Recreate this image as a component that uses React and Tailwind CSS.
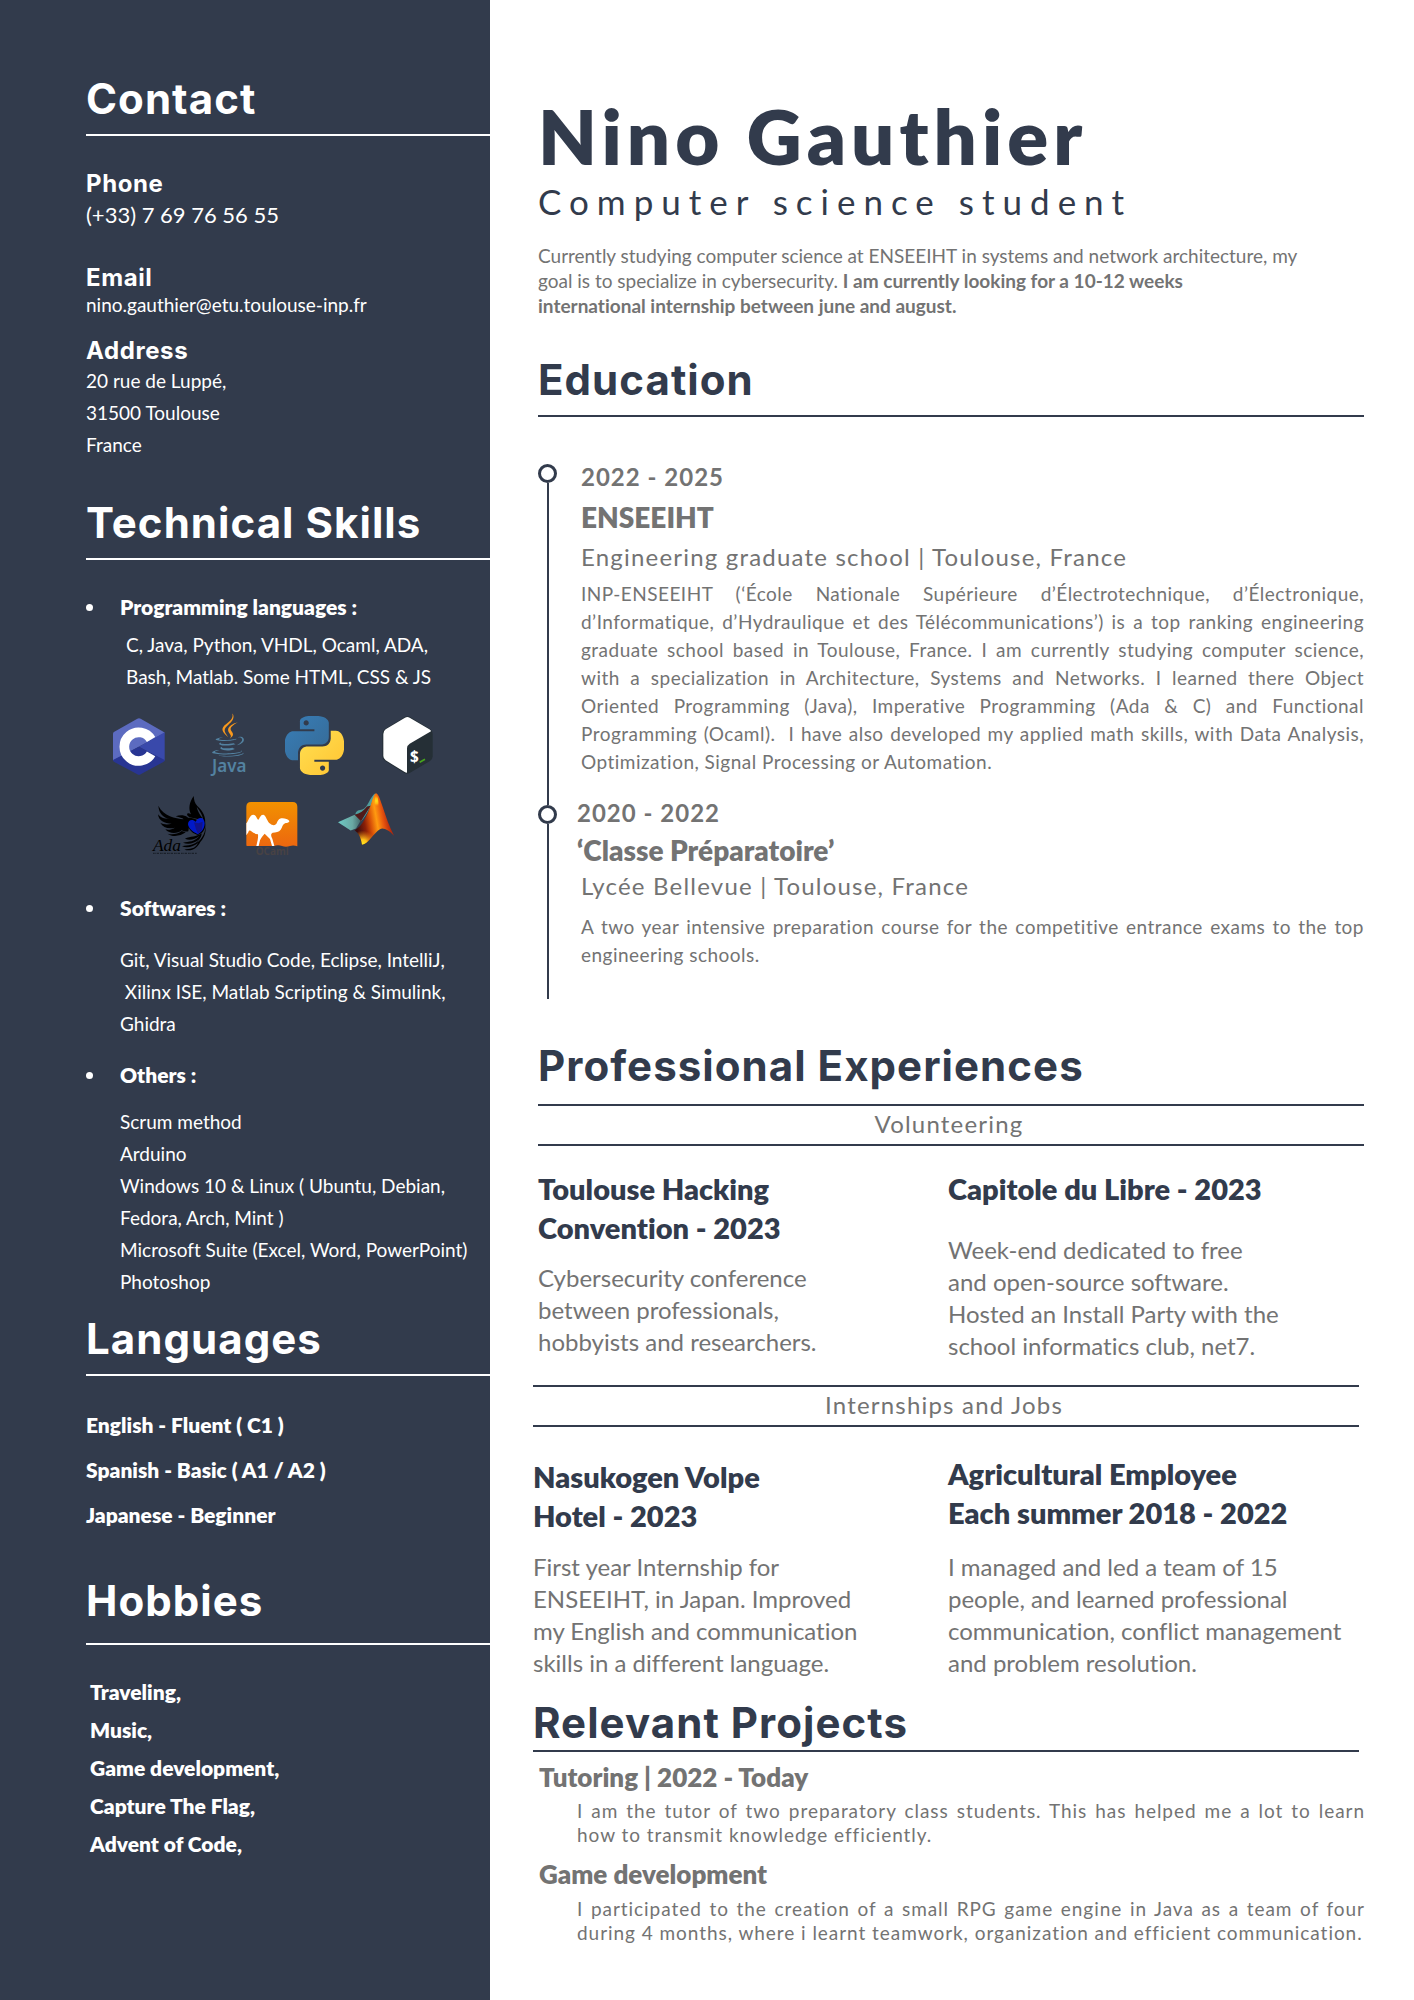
import React from "react";

const HEADING = "font-['Inter',sans-serif] font-bold";

function SideHeading({ children, className = "" }) {
  return (
    <h2 className={`${HEADING} border-b-2 border-white text-[42px] leading-[48px] tracking-wide ${className}`}>
      {children}
    </h2>
  );
}

function SideLabel({ children, className = "" }) {
  return <h3 className={`${HEADING} text-[24px] leading-[28px] tracking-wide ${className}`}>{children}</h3>;
}

function MainHeading({ children, className = "" }) {
  return (
    <h2
      className={`${HEADING} border-b-2 border-[#323b4c] text-[42px] leading-[48px] tracking-wide text-[#323b4c] ${className}`}
    >
      {children}
    </h2>
  );
}

function BulletTitle({ children, className = "" }) {
  return (
    <h3 className={`flex items-center text-[21px] leading-[28px] font-extrabold ${className}`}>
      <span className="mr-[27px] size-[7px] rounded-full bg-white" />
      {children}
    </h3>
  );
}

function CLogo() {
  return (
    <svg className="mt-[5px] h-[57px] w-[52px]" viewBox="39 54 156 171" role="img" aria-label="C">
      <path d="M39 182V101q0-4 4-6L112 56q5-3 10 0l68 39q4 2 4 4L116.500 140Z" fill="#5c6bc0" />
      <path d="M116.500 140L194 97V182Z" fill="#3949ab" />
      <path d="M39 180L116.500 140L194 180q0 4-4 6l-68 37q-5 3-10 0L43 186q-4-2-4-6Z" fill="#283593" />
      <path d="M153.200 118.500A43 43 0 1 0 153.200 161.500" fill="none" stroke="#fff" strokeWidth="29" />
    </svg>
  );
}

function JavaLogo() {
  return (
    <svg className="ml-[47px] h-[63px] w-[33px] overflow-visible" viewBox="0 0 33 63" role="img" aria-label="Java">
      <g transform="translate(-6 0) scale(0.345)">
        <g fill="#5382a1">
          <path d="M47.617 98.12s-4.767 2.774 3.397 3.71c9.892 1.13 14.947.968 25.845-1.092 0 0 2.871 1.795 6.873 3.351-24.439 10.47-55.308-.607-36.115-5.969zm-2.988-13.665s-5.348 3.959 2.823 4.805c10.567 1.091 18.91 1.18 33.354-1.6 0 0 1.993 2.025 5.132 3.131-29.542 8.64-62.446.68-41.309-6.336z" />
          <path d="M102.123 108.229s3.529 2.91-3.888 5.159c-14.102 4.272-58.706 5.56-71.094.171-4.451-1.938 3.899-4.625 6.526-5.192 2.739-.593 4.303-.485 4.303-.485-4.953-3.487-32.013 6.85-13.743 9.815 49.821 8.076 90.817-3.637 77.896-9.468zM49.912 70.294s-22.686 5.389-8.033 7.348c6.188.828 18.518.638 30.011-.326 9.39-.789 18.813-2.474 18.813-2.474s-3.308 1.419-5.704 3.053c-23.042 6.061-67.544 3.238-54.731-2.958 10.832-5.239 19.644-4.643 19.644-4.643zM90.609 93.041c23.421-12.167 12.591-23.86 5.032-22.285-1.848.385-2.677.72-2.677.72s.688-1.079 2-1.543c14.953-5.255 26.451 15.503-4.823 23.725 0-.002.359-.327.468-.617z" />
          <path d="M52.214 126.021c22.476 1.437 57-.8 57.817-11.436 0 0-1.571 4.032-18.577 7.231-19.186 3.612-42.854 3.191-56.887.874 0 .001 2.875 2.381 17.647 3.331z" />
        </g>
        <g fill="#f8981d">
          <path d="M69.802 61.271c6.025 6.935-1.58 13.17-1.58 13.17s15.289-7.891 8.269-17.777c-6.559-9.215-11.587-13.792 15.635-29.58 0 .001-42.731 10.67-22.324 34.187z" />
          <path d="M76.491 1.587S89.459 14.563 64.188 34.51c-20.266 16.006-4.621 25.13-.007 35.559-11.831-10.673-20.509-20.07-14.688-28.815C58.041 28.42 81.722 22.195 76.491 1.587z" />
        </g>
      </g>
      <text x="0" y="59" fontSize="17" fontWeight="600" fontFamily="Noto Sans, sans-serif" fill="#5382a1">Java</text>
    </svg>
  );
}

function PythonLogo() {
  return (
    <svg className="mt-[3px] ml-10 size-[59px]" viewBox="0.300 0.100 23.500 23.800" role="img" aria-label="Python">
      <defs>
        <linearGradient id="pyBlue" x1="0" y1="0" x2="1" y2="1">
          <stop offset="0" stopColor="#387eb8" />
          <stop offset="1" stopColor="#366994" />
        </linearGradient>
        <linearGradient id="pyYellow" x1="0" y1="0" x2="1" y2="1">
          <stop offset="0" stopColor="#ffe052" />
          <stop offset="1" stopColor="#ffc331" />
        </linearGradient>
      </defs>
      <path
        fill="url(#pyBlue)"
        d="M14.25.18l.9.2.73.26.59.3.45.32.34.34.25.34.16.33.1.3.04.26.02.2-.01.13V8.5l-.05.63-.13.55-.21.46-.26.38-.3.31-.33.25-.35.19-.35.14-.33.1-.3.07-.26.04-.21.02H8.77l-.69.05-.59.14-.5.22-.41.27-.33.32-.27.35-.2.36-.15.37-.1.35-.07.32-.04.27-.02.21v3.06H3.17l-.21-.03-.28-.07-.32-.12-.35-.18-.36-.26-.36-.36-.35-.46-.32-.59-.28-.73-.21-.88-.14-1.05-.05-1.23.06-1.22.16-1.04.24-.87.32-.71.36-.57.4-.44.42-.33.42-.24.4-.16.36-.1.32-.05.24-.01h.16l.06.01h8.16v-.83H6.18l-.01-2.75-.02-.37.05-.34.11-.31.17-.28.25-.26.31-.23.38-.2.44-.18.51-.15.58-.12.64-.1.71-.06.77-.04.84-.02 1.27.05zm-6.3 1.98l-.23.33-.08.41.08.41.23.34.33.22.41.09.41-.09.33-.22.23-.34.08-.41-.08-.41-.23-.33-.33-.22-.41-.09-.41.09z"
      />
      <path
        fill="url(#pyYellow)"
        d="M21.04 6.11l.28.06.32.12.35.18.36.27.36.35.35.47.32.59.28.73.21.88.14 1.04.05 1.23-.06 1.23-.16 1.04-.24.86-.32.71-.36.57-.4.45-.42.33-.42.24-.4.16-.36.09-.32.05-.24.02-.16-.01h-8.22v.82h5.84l.01 2.76.02.36-.05.34-.11.31-.17.29-.25.25-.31.24-.38.2-.44.17-.51.15-.58.13-.64.09-.71.07-.77.04-.84.01-1.27-.04-1.07-.14-.9-.2-.73-.25-.59-.3-.45-.33-.34-.34-.25-.34-.16-.33-.1-.3-.04-.25-.02-.2.01-.13v-5.34l.05-.64.13-.54.21-.46.26-.38.3-.32.33-.24.35-.2.35-.14.33-.1.3-.06.26-.04.21-.02.13-.01h5.84l.69-.05.59-.14.5-.21.41-.28.33-.32.27-.35.2-.36.15-.36.1-.35.07-.32.04-.28.02-.21V6.07h2.09l.14.01zm-6.47 14.25l-.23.33-.08.41.08.41.23.33.33.23.41.08.41-.08.33-.23.23-.33.08-.41-.08-.41-.23-.33-.33-.23-.41-.08-.41.08z"
      />
    </svg>
  );
}

function BashLogo() {
  return (
    <svg className="mt-[3px] ml-[38px] h-[58px] w-[51px]" viewBox="847 47 153 174" role="img" aria-label="Bash">
      <path d="M915 50q8-4 16 0l60 36q8 5 8 14v68q0 9-8 14l-61 36q-8 4-16 0l-58-36q-8-5-8-14v-68q0-9 8-14Z" fill="#252f36" />
      <path d="M916 52q7-4 14 0l59 35q5 3 5 6L930 130q-8 5-8 14v73q-4 0-7-2l-57-35q-7-5-7-13v-66q0-9 7-14Z" fill="#fff" />
      <text x="931" y="184" fontSize="46" fontWeight="700" fontFamily="Noto Sans, sans-serif" fill="#fff">$</text>
      <path d="M960 186L976 177" stroke="#47a51d" strokeWidth="5" />
    </svg>
  );
}

function AdaLogo() {
  return (
    <svg className="mt-[3px] h-[59px] w-[54px] overflow-visible" viewBox="155 288 162 177" role="img" aria-label="Ada">
      <g fill="#000">
        <path d="M174 317C176 340 188 353 208 357C190 357 180 352 173 343C175 362 192 371 214 371C200 375 189 373 180 368C188 383 205 388 224 383C213 389 204 391 195 388C207 403 232 402 244 391C250 394 257 396 264 394L268 365L262 352C250 344 238 345 226 349C238 352 246 354 250 358C225 354 190 350 174 317Z" />
        <path d="M202 401C216 412 240 409 256 397L244 393C232 402 216 405 202 401Z" />
        <path d="M280 288C266 308 264 327 272 343C260 335 255 345 268 352L292 357L306 354C298 344 292 333 289 320C300 335 306 344 308 357L314 376C318 352 308 333 291 318C283 309 281 300 280 288Z" />
        <path d="M262 354C272 352 282 356 292 361C302 352 315 357 315 375C314 393 303 402 292 405C278 401 267 392 262 376Z" />
        <path d="M315 372C318 395 305 416 291 428C300 414 304 408 304 400C288 411 270 409 254 416C268 423 284 418 298 407C283 426 265 424 248 428C263 435 281 431 297 418C283 439 263 434 245 439C262 446 280 439 293 429C285 448 267 446 252 449C275 456 291 444 300 426C315 410 318 392 315 372Z" />
      </g>
      <path d="M263 373C263 360 276 356 286 365C294 350 312 350 313 370C313 387 302 397 292 403C280 396 265 388 263 373Z" fill="#0019c8" />
      <path d="M281 367L294 370L307 365L305 389L293 402L287 388Z" fill="#11128a" />
      <text x="158" y="452" fontSize="52" fontStyle="italic" fontFamily="Liberation Serif, serif" fill="#000">Ada</text>
      <path d="M158 460H290" stroke="#1a202a" strokeWidth="4" strokeDasharray="5 2 3 2 6 3" />
    </svg>
  );
}

function OCamlLogo() {
  return (
    <svg className="mt-[9px] ml-10 h-[54px] w-[52px] overflow-visible" viewBox="440 308 154 162" role="img" aria-label="OCaml">
      <defs>
        <linearGradient id="camlOrange" x1="0" y1="0" x2="0" y2="1">
          <stop offset="0" stopColor="#f29100" />
          <stop offset="1" stopColor="#ec670f" />
        </linearGradient>
      </defs>
      <path d="M440 322q0-14 14-14h125q14 0 14 14V441q-12-5-22-1q-12 4-24 0q-12-4-24 0H442q-2 0-2-4Z" fill="url(#camlOrange)" />
      <path
        d="M440 372C446 366 450 346 461 346C470 346 471 360 476 361C480 357 483 345 491 346C500 348 502 368 512 373C518 379 528 379 531 372C535 363 538 356 549 357C556 357 566 360 569 365C569 371 560 370 554 373C548 376 548 384 543 391C538 398 528 400 519 400C513 403 513 409 518 418L524 440H517L511 419L495 403C491 407 485 414 481 423L477 440H470C474 424 476 413 475 405C466 403 460 401 455 396C451 392 447 394 446 399L440 408Z"
        fill="#fff"
      />
      <text x="468" y="467" fontSize="30" fontWeight="700" fontFamily="Noto Sans, sans-serif" fill="#484244">OCaml</text>
    </svg>
  );
}

function MatlabLogo() {
  return (
    <svg className="ml-10 h-[52px] w-[56px]" viewBox="714 280 168 155" role="img" aria-label="Matlab">
      <defs>
        <linearGradient id="mlTeal" x1="0" y1="0" x2="1" y2="0">
          <stop offset="0" stopColor="#6ecbc6" />
          <stop offset="0.600" stopColor="#6aa8a3" />
          <stop offset="1" stopColor="#3f5f63" />
        </linearGradient>
        <linearGradient id="mlPeak" x1="768" y1="370" x2="882" y2="350" gradientUnits="userSpaceOnUse">
          <stop offset="0" stopColor="#3a0d0d" />
          <stop offset="0.220" stopColor="#8a1f08" />
          <stop offset="0.380" stopColor="#d95208" />
          <stop offset="0.540" stopColor="#ff9a10" />
          <stop offset="0.700" stopColor="#e8570e" />
          <stop offset="0.850" stopColor="#b92b0c" />
          <stop offset="1" stopColor="#a51d08" />
        </linearGradient>
        <radialGradient id="mlGlow" cx="788" cy="434" r="42" gradientUnits="userSpaceOnUse">
          <stop offset="0" stopColor="#ffee20" />
          <stop offset="0.350" stopColor="#ffc21a" />
          <stop offset="1" stopColor="#ff8a10" stopOpacity="0" />
        </radialGradient>
        <radialGradient id="mlTop" cx="829" cy="303" r="34" gradientUnits="userSpaceOnUse">
          <stop offset="0" stopColor="#ffe21a" />
          <stop offset="0.250" stopColor="#ffb612" />
          <stop offset="0.500" stopColor="#ff8a10" stopOpacity="0" />
        </radialGradient>
      </defs>
      <path d="M714 367L764 345L786 356L768 386L752 392Z" fill="url(#mlTeal)" />
      <path d="M766 344C768 331 778 331 787 329C804 323 810 290 826 280C816 310 802 346 783 364Z" fill="#4f9d9d" />
      <path d="M764 345C780 341 792 332 801 320L812 318L783 364Z" fill="#501919" />
      <path
        d="M828 280C836 282 841 300 848 321C858 351 868 381 882 408C868 392 850 382 840 388C822 398 806 431 786 435C783 418 780 404 764 391C788 378 802 345 812 316C818 298 822 282 828 280Z"
        fill="url(#mlPeak)"
      />
      <path
        d="M828 280C836 282 841 300 848 321C858 351 868 381 882 408C868 392 850 382 840 388C822 398 806 431 786 435C783 418 780 404 764 391C788 378 802 345 812 316C818 298 822 282 828 280Z"
        fill="url(#mlGlow)"
      />
      <path d="M828 280C834 284 836 310 836 330H824C822 310 824 290 828 280Z" fill="url(#mlTop)" />
    </svg>
  );
}

function Sidebar() {
  return (
    <aside className="bg-[#323b4c] pt-[75px] pb-20 pl-[86px] text-[19px] leading-[32px] text-white">
      <section>
        <SideHeading className="pb-[11px]">Contact</SideHeading>
        <SideLabel className="mt-[34px]">Phone</SideLabel>
        <p className="mt-px text-[22px]">(+33) 7 69 76 56 55</p>
        <SideLabel className="mt-[33px]">Email</SideLabel>
        <a href="mailto:nino.gauthier@etu.toulouse-inp.fr" className="block leading-[26px]">
          nino.gauthier@etu.toulouse-inp.fr
        </a>
        <SideLabel className="mt-[19px]">Address</SideLabel>
        <address className="not-italic">
          20 rue de Luppé,
          <br />
          31500 Toulouse
          <br />
          France
        </address>
      </section>

      <section className="mt-[38px]">
        <SideHeading className="pb-[11px]">Technical Skills</SideHeading>
        <BulletTitle className="mt-[33px]">Programming languages :</BulletTitle>
        <p className="mt-2 pl-10">
          C, Java, Python, VHDL, Ocaml, ADA,
          <br />
          Bash, Matlab. Some HTML, CSS &amp; JS
        </p>
        <div className="mt-5 flex h-[63px] items-start pl-[27px]">
          <CLogo />
          <JavaLogo />
          <PythonLogo />
          <BashLogo />
        </div>
        <div className="mt-[17px] flex h-[63px] items-start pl-[66px]">
          <AdaLogo />
          <OCamlLogo />
          <MatlabLogo />
        </div>
        <BulletTitle className="mt-[38px]">Softwares :</BulletTitle>
        <p className="mt-[22px] pl-[34px]">
          Git, Visual Studio Code, Eclipse, IntelliJ,
          <br />
          &nbsp;Xilinx ISE, Matlab Scripting &amp; Simulink,
          <br />
          Ghidra
        </p>
        <BulletTitle className="mt-[21px]">Others :</BulletTitle>
        <ul className="mt-[17px] pl-[34px]">
          <li>Scrum method</li>
          <li>Arduino</li>
          <li>
            Windows 10 &amp; Linux ( Ubuntu, Debian,
            <br />
            Fedora, Arch, Mint )
          </li>
          <li className="whitespace-nowrap">Microsoft Suite (Excel, Word, PowerPoint)</li>
          <li>Photoshop</li>
        </ul>
      </section>

      <section className="mt-[17px]">
        <SideHeading className="pb-[11px]">Languages</SideHeading>
        <ul className="mt-[26px] text-[21px] leading-[45px] font-extrabold">
          <li>English - Fluent ( C1 )</li>
          <li>Spanish - Basic ( A1 / A2 )</li>
          <li>Japanese - Beginner</li>
        </ul>
      </section>

      <section className="mt-10">
        <SideHeading className="pb-[18px]">Hobbies</SideHeading>
        <ul className="mt-7 pl-1 text-[21px] leading-[38px] font-extrabold">
          <li>Traveling,</li>
          <li>Music,</li>
          <li>Game development,</li>
          <li>Capture The Flag,</li>
          <li>Advent of Code,</li>
        </ul>
      </section>
    </aside>
  );
}

function RailDot() {
  return <span className="size-[19px] shrink-0 rounded-full border-3 border-[#323b4c] bg-white" />;
}

function Divider({ children }) {
  return (
    <h3 className="border-b-2 border-[#323b4c] pr-1 pb-[2px] text-center text-[24px] leading-[36px] tracking-wider text-[#737373]">
      {children}
    </h3>
  );
}

function JobTitle({ children }) {
  return <h4 className="text-[29px] leading-[39px] font-extrabold text-[#323b4c]">{children}</h4>;
}

function Main() {
  return (
    <main className="pt-[96px] text-[#737373]">
      <header className="pr-[50px] pl-12">
        <h1 className="text-[76px] leading-[80px] font-extrabold tracking-[5px] text-[#323b4c]">Nino Gauthier</h1>
        <p className="mt-[3px] text-[35px] leading-[44px] tracking-[8px] text-[#323b4c]">Computer science student</p>
        <p className="mt-[20px] text-[19px] leading-[25px]">
          Currently studying computer science at ENSEEIHT in systems and network architecture, my
          <br />
          goal is to specialize in cybersecurity. <strong>I am currently looking for a 10-12 weeks</strong>
          <br />
          <strong>international internship between june and august.</strong>
        </p>
      </header>

      <section className="mt-[38px] pr-[50px] pl-12">
        <MainHeading className="pb-[11px]">Education</MainHeading>
        <ol className="mt-[45px]">
          <li className="flex">
            <div className="flex w-[19px] shrink-0 flex-col items-center pt-[2px]">
              <RailDot />
              <span className="w-[2px] flex-1 bg-[#323b4c]" />
            </div>
            <div className="min-w-0 flex-1 pb-[22px] pl-6">
              <p className="text-[24px] leading-[30px] font-bold tracking-[1px]">2022 - 2025</p>
              <h3 className="mt-[7px] text-[28px] leading-[36px] font-extrabold">ENSEEIHT</h3>
              <p className="mt-[7px] text-[24px] leading-[30px] tracking-wider">
                Engineering graduate school | Toulouse, France
              </p>
              <p className="mt-[8px] text-justify text-[19px] leading-[28px] tracking-wide">
                INP-ENSEEIHT (‘École Nationale Supérieure d’Électrotechnique, d’Électronique, d’Informatique,
                d’Hydraulique et des Télécommunications’) is a top ranking engineering graduate school based in
                Toulouse, France. I am currently studying computer science, with a specialization in Architecture,
                Systems and Networks. I learned there Object Oriented Programming (Java), Imperative Programming (Ada
                &amp; C) and Functional Programming (Ocaml).&nbsp; I have also developed my applied math skills, with
                Data Analysis, Optimization, Signal Processing or Automation.
              </p>
            </div>
          </li>
          <li className="flex">
            <div className="flex w-[19px] shrink-0 flex-col items-center">
              <span className="h-[7px] w-[2px] bg-[#323b4c]" />
              <RailDot />
              <span className="w-[2px] flex-1 bg-[#323b4c]" />
            </div>
            <div className="min-w-0 flex-1 pb-[30px] pl-5">
              <p className="text-[24px] leading-[30px] font-bold tracking-[1px]">2020 - 2022</p>
              <h3 className="mt-1 text-[28px] leading-[36px] font-extrabold">‘Classe Préparatoire’</h3>
              <div className="pl-1">
                <p className="mt-[3px] text-[24px] leading-[30px] tracking-wider">Lycée Bellevue | Toulouse, France</p>
                <p className="mt-[12px] text-justify text-[19px] leading-[28px] tracking-wide">
                  A two year intensive preparation course for the competitive entrance exams to the top engineering
                  schools.
                </p>
              </div>
            </div>
          </li>
        </ol>
      </section>

      <section className="mt-[43px] pr-[50px] pl-12">
        <MainHeading className="pb-[14px]">Professional Experiences</MainHeading>
        <Divider>Volunteering</Divider>
        <div className="grid grid-cols-[410px_minmax(0,1fr)] pt-[23px] text-[24px] leading-[32px]">
          <article>
            <JobTitle>
              Toulouse Hacking
              <br />
              Convention - 2023
            </JobTitle>
            <p className="mt-[15px]">
              Cybersecurity conference
              <br />
              between professionals,
              <br />
              hobbyists and researchers.
            </p>
          </article>
          <article>
            <JobTitle>Capitole du Libre - 2023</JobTitle>
            <p className="mt-[26px]">
              Week-end dedicated to free
              <br />
              and open-source software.
              <br />
              Hosted an Install Party with the
              <br />
              school informatics club, net7.
            </p>
          </article>
        </div>
      </section>

      <section className="mt-[23px] pr-[55px] pl-[43px]">
        <div className="border-t-2 border-[#323b4c]">
          <Divider>Internships and Jobs</Divider>
        </div>
        <div className="grid grid-cols-[415px_minmax(0,1fr)] pt-[27px] text-[24px] leading-[32px]">
          <article className="pt-[3px]">
            <JobTitle>
              Nasukogen Volpe
              <br />
              Hotel - 2023
            </JobTitle>
            <p className="mt-[16px]">
              First year Internship for
              <br />
              ENSEEIHT, in Japan. Improved
              <br />
              my English and communication
              <br />
              skills in a different language.
            </p>
          </article>
          <article>
            <JobTitle>
              Agricultural Employee
              <br />
              Each summer 2018 - 2022
            </JobTitle>
            <p className="mt-[19px]">
              I managed and led a team of 15
              <br />
              people, and learned professional
              <br />
              communication, conflict management
              <br />
              and problem resolution.
            </p>
          </article>
        </div>
      </section>

      <section className="mt-5 pb-[55px]">
        <div className="pr-[55px] pl-[43px]">
          <MainHeading className="pb-[3px]">Relevant Projects</MainHeading>
        </div>
        <div className="pr-[49px] pl-[49px] text-[19px] leading-[24px] tracking-wider">
          <h3 className="mt-[9px] text-[26px] leading-[32px] font-extrabold tracking-normal">
            Tutoring | 2022 - Today
          </h3>
          <p className="mt-[6px] pl-[38px] text-justify">
            I am the tutor of two preparatory class students. This has helped me a lot to learn how to transmit
            knowledge efficiently.
          </p>
          <h3 className="mt-[11px] text-[26px] leading-[32px] font-extrabold tracking-normal">Game development</h3>
          <p className="mt-[7px] pl-[38px] text-justify">
            I participated to the creation of a small RPG game engine in Java as a team of four during 4 months, where
            i learnt teamwork, organization and efficient communication.
          </p>
        </div>
      </section>
    </main>
  );
}

export default function App() {
  return (
    <div className="grid min-h-screen grid-cols-[490px_minmax(0,1fr)] bg-white font-['Lato',sans-serif] [font-variant-ligatures:no-common-ligatures]">
      <Sidebar />
      <Main />
    </div>
  );
}
